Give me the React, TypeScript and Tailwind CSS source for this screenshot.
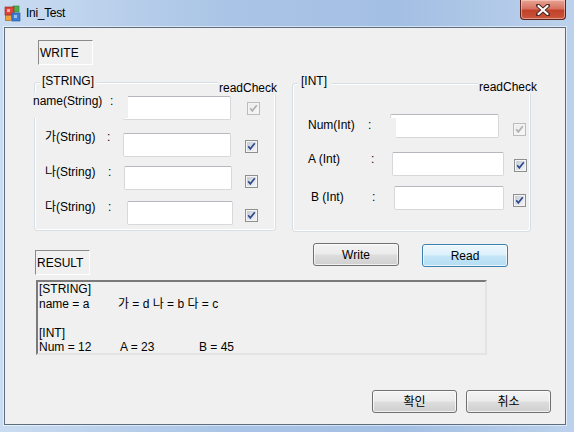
import type { ReactNode } from 'react'

const FONT = { fontFamily: '"Liberation Sans", "Noto Sans CJK KR", sans-serif' }

function Check({ disabled = false, className = '' }: { disabled?: boolean; className?: string }) {
  const id = disabled ? 'ckd' : 'ck'
  return (
    <svg width="13" height="13" viewBox="0 0 13 13" className={`shrink-0 ${className}`}>
      <defs>
        <linearGradient id={id} x1="0" y1="0" x2="1" y2="1">
          <stop offset="0" stopColor={disabled ? '#ececec' : '#c6ccd4'} />
          <stop offset="1" stopColor={disabled ? '#f7f7f7' : '#f4f4f4'} />
        </linearGradient>
      </defs>
      <rect x="0.5" y="0.5" width="12" height="12" fill="#f4f4f4" stroke={disabled ? '#bcbcbc' : '#8e8f8f'} />
      <rect x="2" y="2" width="9" height="9" fill={`url(#${id})`} />
      <path
        d="M3.2 6.3 L5.3 8.8 L9.8 3.2"
        fill="none"
        stroke={disabled ? '#b0b0b0' : '#2f4a91'}
        strokeWidth="1.7"
      />
    </svg>
  )
}

function Edit({ className = '' }: { className?: string }) {
  return (
    <div
      className={`h-[24px] shrink-0 bg-white border border-[#d6d8dc] border-t-[#b5b8be] rounded-[2px] ${className}`}
    />
  )
}

function Btn({ children, def = false, className = '' }: { children: ReactNode; def?: boolean; className?: string }) {
  return (
    <div
      className={
        def
          ? `h-[23px] shrink-0 flex items-center justify-center rounded-[3px] border border-[#3c7fb1] bg-[linear-gradient(180deg,#eef7fd_0%,#dcf0fb_48%,#c4e5f7_52%,#b4ddf4_100%)] shadow-[inset_0_0_0_1px_rgba(255,255,255,0.7)] text-[12px] text-black ${className}`
          : `h-[23px] shrink-0 flex items-center justify-center rounded-[3px] border border-[#707070] bg-[linear-gradient(180deg,#f3f3f3_0%,#ebebeb_48%,#dddddd_52%,#cfcfcf_100%)] shadow-[inset_0_0_0_1px_rgba(255,255,255,0.7)] text-[12px] text-black ${className}`
      }
    >
      {children}
    </div>
  )
}

function Sunken({ children, className = '' }: { children: ReactNode; className?: string }) {
  return (
    <div
      className={`h-[25px] w-[55px] shrink-0 border border-t-[#8a8a8a] border-l-[#8a8a8a] border-r-white border-b-white pl-[1px] pt-[5px] text-[12px] leading-[14px] text-black ${className}`}
    >
      {children}
    </div>
  )
}

function AppIcon() {
  return (
    <svg width="17" height="17" viewBox="0 0 17 17" className="mt-[5px] ml-[4px]">
      <rect x="9" y="1" width="6" height="6" fill="#4caf50" stroke="#2e7d32" strokeWidth="0.6" />
      <rect x="1" y="2" width="9" height="8" fill="#e0443a" stroke="#9b1c16" strokeWidth="0.6" />
      <rect x="3" y="4" width="3" height="3" fill="#ffffff" opacity="0.6" />
      <rect x="1.5" y="10.5" width="6" height="5" fill="#f0a23b" stroke="#a05a0e" strokeWidth="0.6" />
      <rect x="8" y="8" width="8" height="8" fill="#3d7fd6" stroke="#1b4f98" strokeWidth="0.6" />
      <rect x="10" y="10" width="3" height="3" fill="#ffffff" opacity="0.5" />
    </svg>
  )
}

export default function App() {
  return (
    <div
      className="w-[574px] h-[432px] flex flex-col overflow-hidden bg-[linear-gradient(90deg,#cadcf1_0%,#a9c4e6_40%,#a3bfe3_70%,#bcd2ec_100%)]"
      style={FONT}
    >
      {/* title bar */}
      <div className="h-[27px] flex items-start shrink-0">
        <AppIcon />
        <span className="ml-[5px] mt-[6px] text-[12px] leading-[14px] tracking-[-0.3px] text-black">Ini_Test</span>
        <div className="ml-auto mr-[8px] w-[46px] h-[20px] rounded-b-[4px] border border-t-0 border-[#5a2320] bg-[linear-gradient(180deg,#e9a596_0%,#d6725f_45%,#c2412a_55%,#c9563d_100%)] shadow-[inset_0_0_0_1px_rgba(255,220,210,0.5)] flex items-center justify-center">
          <svg width="14" height="12" viewBox="0 0 14 12">
            <path d="M2 1.5 L12 10.5 M12 1.5 L2 10.5" stroke="#4a2520" strokeWidth="4" strokeLinecap="round" />
            <path d="M2.5 2 L11.5 10 M11.5 2 L2.5 10" stroke="#ffffff" strokeWidth="2.2" strokeLinecap="round" />
          </svg>
        </div>
      </div>

      {/* client area */}
      <div className="ml-[4px] w-[562px] h-[398px] border border-[#5d6d80] bg-[#f0f0f0] flex flex-col text-[12px] leading-[14px] text-black shadow-[0_0_0_1px_rgba(255,255,255,0.55)]">
        <Sunken className="mt-[12px] ml-[33px]">WRITE</Sunken>

        {/* group boxes */}
        <div className="flex items-start mt-[17px]">
          {/* STRING */}
          <div className="relative ml-[29px] w-[242px] h-[149px] shrink-0 border border-[#d5dfe5] rounded-[3px] shadow-[inset_0_0_0_1px_#ffffff]">
            <span className="absolute left-[5px] top-[-9px] bg-[#f0f0f0] pl-[2px] pr-[3px]">[STRING]</span>
            <span className="absolute left-[183px] top-[-2px] bg-[#f0f0f0] pl-[1px] pr-[4px]">readCheck</span>
            <div className="flex flex-col">
              <div className="flex items-start mt-[10px] h-[27px]">
                <div className="relative z-10 -ml-[2px] w-[95px] h-[25px] bg-[#f0f0f0] pt-[1px] shrink-0">
                  <span className="inline-block w-[77px]">name(String)</span>:
                </div>
                <Edit className="-ml-[5px] mt-[3px] w-[108px]" />
                <Check disabled className="ml-[16px] mt-[9px]" />
              </div>
              <div className="flex items-start mt-[10px] h-[27px]">
                <div className="ml-[10px] w-[78px] shrink-0">
                  <span className="inline-block w-[62px]">가(String)</span>:
                </div>
                <Edit className="mt-[3px] w-[108px]" />
                <Check className="ml-[14px] mt-[10px]" />
              </div>
              <div className="flex items-start mt-[8px] h-[25px]">
                <div className="ml-[10px] w-[79px] shrink-0">
                  <span className="inline-block w-[63px]">나(String)</span>:
                </div>
                <Edit className="mt-[1px] w-[108px]" />
                <Check className="ml-[13px] mt-[10px]" />
              </div>
              <div className="flex items-start mt-[10px] h-[25px]">
                <div className="ml-[10px] w-[82px] shrink-0">
                  <span className="inline-block w-[63px]">다(String)</span>:
                </div>
                <Edit className="mt-[1px] w-[106px]" />
                <Check className="ml-[12px] mt-[9px]" />
              </div>
            </div>
          </div>

          {/* INT */}
          <div className="relative ml-[16px] mt-[1px] w-[239px] h-[149px] shrink-0 border border-[#d5dfe5] rounded-[3px] shadow-[inset_0_0_0_1px_#ffffff]">
            <span className="absolute left-[5px] top-[-10px] bg-[#f0f0f0] pl-[3px] pr-[5px]">[INT]</span>
            <span className="absolute left-[185px] top-[-4px] bg-[#f0f0f0] pl-[1px] pr-[4px]">readCheck</span>
            <div className="flex flex-col">
              <div className="flex items-start mt-[30px] h-[24px]">
                <div className="relative z-10 ml-[8px] mt-[4px] w-[95px] h-[23px] bg-[#f0f0f0] pl-[7px] shrink-0">
                  <span className="inline-block w-[60px]">Num(Int)</span>:
                </div>
                <Edit className="-ml-[6px] w-[109px]" />
                <Check disabled className="ml-[14px] mt-[9px]" />
              </div>
              <div className="flex items-start mt-[14px] h-[24px]">
                <div className="ml-[15px] w-[84px] shrink-0">
                  <span className="inline-block w-[63px]">A (Int)</span>:
                </div>
                <Edit className="w-[112px]" />
                <Check className="ml-[10px] mt-[7px]" />
              </div>
              <div className="flex items-start mt-[10px] h-[24px]">
                <div className="ml-[18px] mt-[4px] w-[83px] shrink-0">
                  <span className="inline-block w-[61px]">B (Int)</span>:
                </div>
                <Edit className="w-[110px]" />
                <Check className="ml-[9px] mt-[8px]" />
              </div>
            </div>
          </div>
        </div>

        {/* RESULT + buttons */}
        <div className="flex items-start">
          <Sunken className="ml-[30px] mt-[18px]">RESULT</Sunken>
          <Btn className="ml-[223px] mt-[11px] w-[86px]">Write</Btn>
          <Btn def className="ml-[23px] mt-[12px] w-[86px]">Read</Btn>
        </div>

        <div className="ml-[31px] mt-[5px] w-[451px] h-[75px] shrink-0 border-2 border-t-[#7a7a7a] border-l-[#7a7a7a] border-r-[#e3e3e3] border-b-[#e3e3e3] pl-[1px] leading-[14.5px]">
          <div>[STRING]</div>
          <div>
            <span className="inline-block w-[79px]">name = a</span>가 = d 나 = b 다 = c
          </div>
          <div>&nbsp;</div>
          <div>[INT]</div>
          <div>
            <span className="inline-block w-[81px]">Num = 12</span>
            <span className="inline-block w-[79px]">A = 23</span>B = 45
          </div>
        </div>

        <div className="flex mt-[35px]">
          <Btn className="ml-[367px] w-[85px]">확인</Btn>
          <Btn className="ml-[9px] w-[85px]">취소</Btn>
        </div>
      </div>
    </div>
  )
}
